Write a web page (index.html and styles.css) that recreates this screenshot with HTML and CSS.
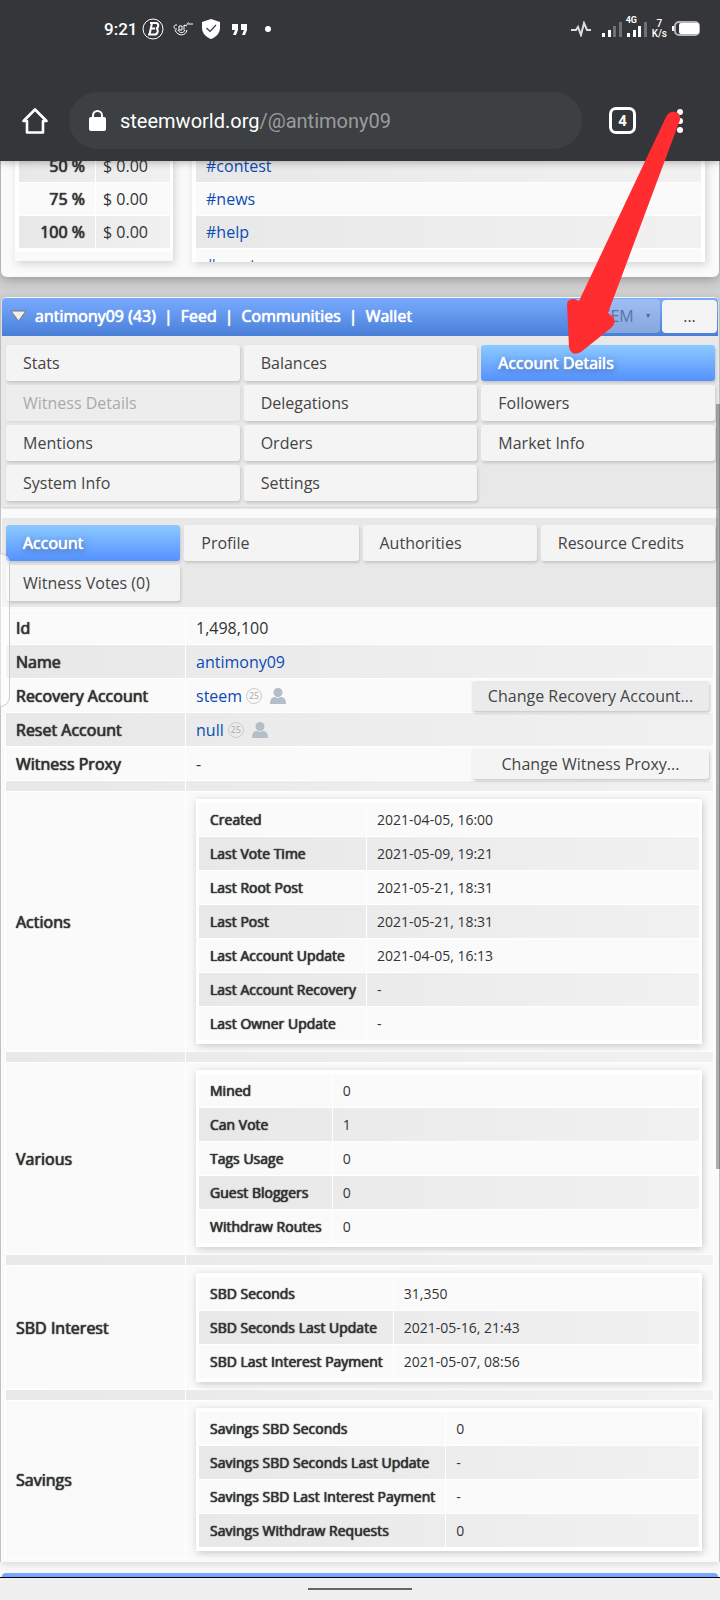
FILE: index.html
```html
<!DOCTYPE html>
<html lang="en">
<head>
    <meta charset="UTF-8">
    <meta name="viewport" content="width=device-width, initial-scale=1.0">
    <title>steemworld.org/@antimony09</title>
    <link rel="stylesheet" href="styles.css">
</head>
<body>
    <!-- Browser chrome -->
    <header class="chrome">
        <div class="status">
            <div class="status-left">
                <span class="clock">9:21</span>
                <svg width="22" height="22" viewBox="0 0 22 22"><circle cx="11" cy="11" r="10" fill="none" stroke="#fff"/><path d="M8 5h6c3 0 3 5 0 5.500c3 .5 2 6-1.500 6H6M10 5L7.500 16.500M8 10.600h5" fill="none" stroke="#fff" stroke-width="2"/></svg>
                <svg width="22" height="16" viewBox="0 0 22 16"><path d="M5 4c-4-1-4 5 0 4M7 5h3v4H7zM12 9V4l3 1M15 4c0-3 3-3 2 0M18 3h3M3 9c3 7 11 6 12 0M6 9c2 4 6 3 7 0" fill="none" stroke="#fff" stroke-width="1"/></svg>
                <svg width="18" height="20" viewBox="0 0 18 20"><path d="M9 0l9 3v6c0 5-4 9-9 11C4 18 0 14 0 9V3z" fill="#fff"/><path d="M4.500 9l3.500 3.500L14 6" fill="none" stroke="#35363a" stroke-width="1.200"/></svg>
                <svg class="quotes" width="16" height="11" viewBox="0 0 16 11"><path d="M0 0h6v6L4 11H1l2-5H0zM9 0h6v6l-2 5h-3l2-5H9z" fill="#fff"/></svg>
                <span class="dot"></span>
            </div>
            <div class="status-right">
                <svg width="22" height="16" viewBox="0 0 22 16"><path d="M1 9h5l2 -3 3 8 3 -12 3 7h4" fill="none" stroke="#ddd" stroke-width="2"/></svg>
                <svg width="20" height="16" viewBox="0 0 20 16"><path d="M0 12h3v4H0zM6 9h3v7H6z" fill="#fff"/><path d="M11 5h3v11h-3zM17 1h3v15h-3z" fill="#707174"/></svg>
                <div class="signal">
                    <small>4G</small>
                    <svg width="20" height="16" viewBox="0 0 20 16"><path d="M0 12h3v4H0zM6 9h3v7H6zM11 5h3v11h-3z" fill="#fff"/><path d="M17 1h3v15h-3z" fill="#707174"/></svg>
                </div>
                <div class="speed"><span>7</span><span>K/s</span></div>
                <svg width="29" height="16" viewBox="0 0 29 16"><rect x="3" y="1" width="24" height="13" rx="4" fill="none" stroke="#b5b5b6" stroke-width="2"/><rect x="7" y="2" width="20" height="11" rx="2" fill="#fff"/><path d="M0 5h2v5H0z" fill="#fff"/></svg>
            </div>
        </div>
        <div class="toolbar">
            <button class="icon-button" aria-label="Home">
                <svg width="28" height="28" viewBox="0 0 28 28"><path d="M14 2.500L2.500 14H6v11.500h16V14h3.500z" fill="none" stroke="#fff" stroke-width="2.600" stroke-linejoin="round"/></svg>
            </button>
            <button class="address">
                <svg width="17" height="22" viewBox="0 0 17 22"><rect y="7" width="17" height="14" rx="2" fill="#fff"/><path d="M4 8V5.500a4.500 4.500 0 0 1 9 0V8" fill="none" stroke="#fff" stroke-width="2"/></svg>
                <span>steemworld.org<span class="path">/@antimony09</span></span>
            </button>
            <button class="tabs">4</button>
            <button class="icon-button" aria-label="Menu">
                <svg width="28" height="28" viewBox="0 0 28 28"><circle cx="14" cy="5" r="3" fill="#fff"/><circle cx="14" cy="14" r="3" fill="#fff"/><circle cx="14" cy="23" r="3" fill="#fff"/></svg>
            </button>
        </div>
    </header>

    <main class="page">
        <!-- Vote values and tags -->
        <section class="top-panel">
            <div class="votes">
                <table class="vote-table">
                    <tr class="odd"><th>50 %</th><td>$ 0.00</td></tr>
                    <tr><th>75 %</th><td>$ 0.00</td></tr>
                    <tr class="odd"><th>100 %</th><td>$ 0.00</td></tr>
                </table>
            </div>
            <div class="tags">
                <a class="tag odd" href="#">#contest</a>
                <a class="tag" href="#">#news</a>
                <a class="tag odd" href="#">#help</a>
                <a class="tag" href="#">#sport</a>
            </div>
        </section>

        <!-- Account panel -->
        <section class="account">
            <div class="account-head">
                <svg class="toggle" width="17" height="12" viewBox="0 0 17 12"><path d="M1 1h15L8.500 11z" fill="#eee" stroke="#777" stroke-linejoin="round"/></svg>
                <nav class="head-links">
                    <a href="#">antimony09 (43)</a><span>|</span>
                    <a href="#">Feed</a><span>|</span>
                    <a href="#">Communities</a><span>|</span>
                    <a href="#">Wallet</a>
                </nav>
                <div class="currency">
                    <select aria-label="Currency"><option>STEEM</option></select>
                    <span class="caret">▾</span>
                </div>
                <button class="more">...</button>
            </div>

            <div class="menu three">
                <button class="item">Stats</button>
                <button class="item">Balances</button>
                <button class="item active">Account Details</button>
                <button class="item" disabled>Witness Details</button>
                <button class="item">Delegations</button>
                <button class="item">Followers</button>
                <button class="item">Mentions</button>
                <button class="item">Orders</button>
                <button class="item">Market Info</button>
                <button class="item">System Info</button>
                <button class="item">Settings</button>
            </div>

            <div class="menu four">
                <button class="item active">Account</button>
                <button class="item">Profile</button>
                <button class="item">Authorities</button>
                <button class="item">Resource Credits</button>
                <button class="item">Witness Votes (0)</button>
            </div>

            <table class="details">
                <tr><th>Id</th><td>1,498,100</td></tr>
                <tr class="odd"><th>Name</th><td><a href="#">antimony09</a></td></tr>
                <tr>
                    <th>Recovery Account</th>
                    <td>
                        <div class="value">
                            <a href="#">steem</a><span class="level">25</span>
                            <svg width="18" height="16" viewBox="0 0 18 16"><circle cx="9" cy="4.500" r="4.500" fill="#b4bec8"/><path d="M1 16c0-5 2-7 5-7l3 1 3-1c3 0 5 2 5 7z" fill="#b4bec8"/></svg>
                            <button class="change hover">Change Recovery Account...</button>
                        </div>
                    </td>
                </tr>
                <tr class="odd">
                    <th>Reset Account</th>
                    <td>
                        <div class="value">
                            <a href="#">null</a><span class="level">25</span>
                            <svg width="18" height="16" viewBox="0 0 18 16"><circle cx="9" cy="4.500" r="4.500" fill="#b4bec8"/><path d="M1 16c0-5 2-7 5-7l3 1 3-1c3 0 5 2 5 7z" fill="#b4bec8"/></svg>
                        </div>
                    </td>
                </tr>
                <tr>
                    <th>Witness Proxy</th>
                    <td><div class="value">-<button class="change">Change Witness Proxy...</button></div></td>
                </tr>
                <tr class="odd spacer"><th></th><td></td></tr>
                <tr>
                    <th>Actions</th>
                    <td class="nested">
                        <table class="inner">
                            <tr><th>Created</th><td>2021-04-05, 16:00</td></tr>
                            <tr class="odd"><th>Last Vote Time</th><td>2021-05-09, 19:21</td></tr>
                            <tr><th>Last Root Post</th><td>2021-05-21, 18:31</td></tr>
                            <tr class="odd"><th>Last Post</th><td>2021-05-21, 18:31</td></tr>
                            <tr><th>Last Account Update</th><td>2021-04-05, 16:13</td></tr>
                            <tr class="odd"><th>Last Account Recovery</th><td>-</td></tr>
                            <tr><th>Last Owner Update</th><td>-</td></tr>
                        </table>
                    </td>
                </tr>
                <tr class="odd spacer"><th></th><td></td></tr>
                <tr>
                    <th>Various</th>
                    <td class="nested">
                        <table class="inner">
                            <tr><th>Mined</th><td>0</td></tr>
                            <tr class="odd"><th>Can Vote</th><td>1</td></tr>
                            <tr><th>Tags Usage</th><td>0</td></tr>
                            <tr class="odd"><th>Guest Bloggers</th><td>0</td></tr>
                            <tr><th>Withdraw Routes</th><td>0</td></tr>
                        </table>
                    </td>
                </tr>
                <tr class="odd spacer"><th></th><td></td></tr>
                <tr>
                    <th>SBD Interest</th>
                    <td class="nested">
                        <table class="inner">
                            <tr><th>SBD Seconds</th><td>31,350</td></tr>
                            <tr class="odd"><th>SBD Seconds Last Update</th><td>2021-05-16, 21:43</td></tr>
                            <tr><th>SBD Last Interest Payment</th><td>2021-05-07, 08:56</td></tr>
                        </table>
                    </td>
                </tr>
                <tr class="odd spacer"><th></th><td></td></tr>
                <tr>
                    <th>Savings</th>
                    <td class="nested">
                        <table class="inner">
                            <tr><th>Savings SBD Seconds</th><td>0</td></tr>
                            <tr class="odd"><th>Savings SBD Seconds Last Update</th><td>-</td></tr>
                            <tr><th>Savings SBD Last Interest Payment</th><td>-</td></tr>
                            <tr class="odd"><th>Savings Withdraw Requests</th><td>0</td></tr>
                        </table>
                    </td>
                </tr>
            </table>
        </section>

        <section class="next">
            <div class="account-head"></div>
        </section>

        <div class="side-handle"></div>
        <div class="scrollbar"></div>
    </main>

    <footer class="gesture-bar"><span></span></footer>

    <!-- Arrow pointing at Account Details -->
    <svg class="arrow" width="124" height="250" viewBox="560 108 124 250"><path d="M666 117C669 109 682 110 680 120L608 313L613 317Q617 322 611 328L581 352Q571 357 569 347L567 305Q567 298 575 299L579 301Z" fill="#ff2d2f"/></svg>
</body>
</html>
```
FILE: styles.css
```css
* {
    box-sizing: border-box;
}

body {
    margin: 0;
    height: 100vh;
    display: flex;
    flex-direction: column;
    position: relative;
    overflow: hidden;
    background-color: #fafafa;
    font-family: "Open Sans", sans-serif;
    font-size: 16px;
    line-height: 22px;
    color: #333;
}

button, select {
    font: inherit;
    color: #444;
    border: none;
    margin: 0;
    padding: 0;
    cursor: pointer;
}

a {
    color: #0b4bb3;
    text-decoration: none;
}

svg {
    display: block;
    flex: none;
}

/* Browser chrome */
.chrome {
    flex: none;
    height: 161px;
    background-color: #35363a;
    color: #fff;
    font-family: Roboto, sans-serif;
    position: relative;
    z-index: 1;
    box-shadow: 0 1px 8px rgba(0, 0, 0, 0.3);
}

.status {
    display: flex;
    justify-content: space-between;
    align-items: center;
    height: 58px;
    padding: 0 19px 0 104px;
}

.status-left {
    display: flex;
    align-items: center;
    gap: 8px;
}

.clock {
    margin-right: -3px;
    font-size: 17px;
    font-weight: 500;
}

.quotes {
    margin-left: 4px;
}

.dot {
    width: 6px;
    height: 6px;
    margin-left: 9px;
    border-radius: 50%;
    background-color: #fff;
}

.status-right {
    display: flex;
    align-items: center;
    gap: 5px;
}

.status-right svg:first-child {
    margin-right: 5px;
}

.signal {
    position: relative;
}

.signal small {
    position: absolute;
    top: -6px;
    left: -1px;
    font-size: 9px;
    line-height: 10px;
    font-weight: 700;
}

.speed {
    display: flex;
    flex-direction: column;
    align-items: center;
    font-size: 10px;
    line-height: 10px;
    font-weight: 500;
}

.toolbar {
    display: flex;
    align-items: center;
    height: 57px;
    margin-top: 34px;
    padding: 0 26px 0 21px;
}

.icon-button {
    background: none;
}

.address {
    flex: 1;
    display: flex;
    align-items: center;
    gap: 14px;
    height: 57px;
    margin: 0 27px 0 20px;
    padding: 0 20px;
    border-radius: 29px;
    background-color: #3c4043;
    color: #fff;
    font-size: 20px;
    line-height: 28px;
}

.path {
    color: #9a9c9e;
}

.tabs {
    width: 27px;
    height: 27px;
    margin-right: 30px;
    border: 3px solid #fff;
    border-radius: 7px;
    background: none;
    color: #fff;
    font-size: 15px;
    line-height: 20px;
    font-weight: 700;
}

.page {
    flex: 1;
    min-height: 0;
    overflow: hidden;
    position: relative;
    background-color: #d0d0d0;
}

.odd {
    background: linear-gradient(to right, #e8e8e8, #f1f1f1);
}

/* Vote values and tags */
.top-panel {
    display: flex;
    align-items: flex-start;
    gap: 19px;
    margin: -12px 1px 0;
    padding: 0 14px 15px;
    border-radius: 0 0 6px 6px;
    background-color: #fafafa;
    box-shadow: 0 2px 12px rgba(0, 0, 0, 0.3);
}

.votes {
    flex: none;
    width: 158px;
    padding-bottom: 9px;
    background-color: #fafafa;
    box-shadow: 2px 3px 8px rgba(0, 0, 0, 0.15);
}

.vote-table {
    width: 100%;
    padding: 0 2px 3px 3px;
    border-spacing: 1px;
    background-color: #fff;
}

.vote-table th, .vote-table td {
    height: 32px;
    padding: 0 10px 0 7px;
}

.vote-table th {
    width: 76px;
    text-align: right;
}

.tags {
    flex: 1;
    display: flex;
    flex-direction: column;
    gap: 1px;
    height: 113px;
    overflow: hidden;
    padding: 1px 4px 0;
    background-color: #fff;
    box-shadow: 2px 3px 8px rgba(0, 0, 0, 0.15);
}

.tag {
    flex: none;
    height: 32px;
    padding: 5px 10px;
    background-color: #fafafa;
}

/* Heavier labels that keep the regular letter widths */
th, .head-links {
    font-weight: 400;
    text-shadow: 0 0 1px currentColor, 0 0 1px currentColor;
}

th {
    text-align: left;
}

td, th {
    padding: 0;
}

tr:not(.odd) {
    background-color: #fafafa;
}

/* Account panel */
.account {
    position: relative;
    margin: 20px 1px 0;
    padding: 1px 0 3px;
    border-radius: 6px 6px 0 0;
    background-color: #fafafa;
    box-shadow: 0 2px 8px rgba(0, 0, 0, 0.15);
}

.next {
    padding: 11px 1px 0;
    background-color: #fafafa;
}

.account-head {
    display: flex;
    align-items: center;
    height: 38px;
    margin: 0 1px;
    padding: 0 1px 2px 8px;
    border-radius: 4px 4px 0 0;
    background: linear-gradient(#78abff, #4a7fd8);
    box-shadow: 0 1px 2px rgba(0, 0, 0, 0.4);
}

.head-links {
    display: flex;
    gap: 8px;
    margin-left: 8px;
    margin-right: auto;
    color: #fff;
}

.head-links a {
    color: #fff;
}

.currency {
    position: relative;
    width: 90px;
    height: 34px;
    margin-right: 2px;
}

.currency select {
    appearance: none;
    width: 100%;
    height: 100%;
    padding-left: 14px;
    border-radius: 4px;
    background-color: rgba(220, 220, 225, 0.4);
    color: #5674a8;
}

.caret {
    position: absolute;
    top: 5px;
    right: 10px;
    font-size: 8px;
    color: #4a69a0;
}

.more {
    width: 55px;
    height: 33px;
    border-radius: 4px;
    background-color: #f4f4f4;
}

.menu {
    display: grid;
    gap: 4px;
    margin: 0 1px;
    padding: 7px 3px 6px 4px;
    background-color: #e8e8e8;
}

.three {
    grid-template-columns: repeat(3, 1fr);
    margin-bottom: 11px;
    padding-top: 9px;
    box-shadow: 0 1px 2px rgba(0, 0, 0, 0.2);
}

.four {
    grid-template-columns: repeat(4, 1fr);
}

.item {
    height: 36px;
    padding: 0 17px;
    border-radius: 3px;
    background-color: #f4f4f4;
    box-shadow: 1px 2px 3px rgba(0, 0, 0, 0.15);
    text-align: left;
    white-space: nowrap;
}

.item:disabled {
    background-color: #ededed;
    box-shadow: 1px 1px 3px rgba(0, 0, 0, 0.08);
    color: #aaa;
}

.item.active {
    background: linear-gradient(#8ccaff, #5591ff);
    color: #fff;
    text-shadow: 0 0 1px #fff, 0 0 1px #fff, 1px 2px 6px rgba(0, 0, 0, 0.5);
}

.details {
    width: calc(100% - 9px);
    margin: 3px 5px 0 4px;
    border-spacing: 1px;
    background-color: #fff;
}

.details th {
    width: 179px;
    height: 33px;
    padding-left: 10px;
}

.details td {
    padding-left: 10px;
}

.details .spacer th {
    height: 10px;
}

.value {
    display: flex;
    align-items: center;
    height: 33px;
}

.level {
    width: 16px;
    height: 16px;
    margin: 0 7px 0 4px;
    border: 1px solid #ccc;
    border-radius: 50%;
    font-size: 9px;
    line-height: 13px;
    text-align: center;
    color: #aaa;
}

.change {
    width: 237px;
    height: 30px;
    margin-left: auto;
    margin-right: 4px;
    border-radius: 3px;
    background-color: #f4f4f4;
    box-shadow: 1px 2px 3px rgba(0, 0, 0, 0.2);
}

.change.hover {
    background-color: #ebebeb;
}

.details .nested {
    padding: 7px 11px 7px 10px;
}

.inner {
    width: 100%;
    padding: 3px 2px;
    border-spacing: 1px;
    background-color: #fff;
    box-shadow: 1px 2px 8px rgba(0, 0, 0, 0.2);
    font-size: 14px;
}

.details .inner th {
    width: auto;
    padding-left: 11px;
    padding-right: 10px;
    white-space: nowrap;
}

.inner td {
    width: 100%;
}

/* Overlays */
.side-handle {
    position: absolute;
    top: 392px;
    left: -10px;
    width: 20px;
    height: 154px;
    border: 1px solid #ccc;
    border-radius: 14px;
    background-color: rgba(255, 255, 255, 0.5);
}

.scrollbar {
    position: absolute;
    top: 243px;
    right: 0;
    width: 4px;
    height: 765px;
    background-color: rgba(0, 0, 0, 0.3);
}

.arrow {
    position: absolute;
    top: 108px;
    right: 36px;
    z-index: 2;
}

.gesture-bar {
    flex: none;
    display: flex;
    justify-content: center;
    align-items: center;
    height: 23px;
    border-top: 1px solid #000;
    background-color: #efefef;
}

.gesture-bar span {
    width: 104px;
    height: 2px;
    background-color: #666;
}
```
